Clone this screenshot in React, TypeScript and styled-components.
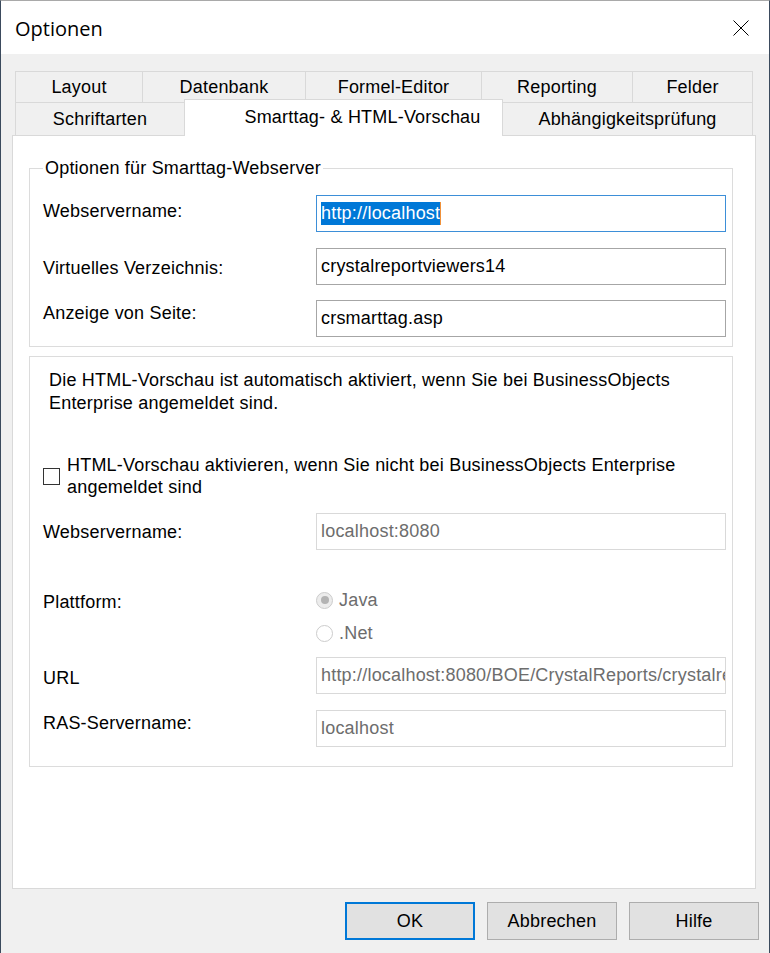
import React from "react";
import styled, { createGlobalStyle } from "styled-components";

const GlobalStyle = createGlobalStyle`
  html, body { margin: 0; padding: 0; background: #f0f0f0; }
  body {
    font-family: "Liberation Sans", Arial, sans-serif;
    font-size: 18px;
    letter-spacing: 0.2px;
    color: #000;
  }
  * { box-sizing: border-box; }
`;

const Window = styled.div`
  width: 770px;
  height: 953px;
  display: flex;
  flex-direction: column;
  border-left: 1px solid #3b4a5d;
  border-right: 1px solid #3b4a5d;
  border-top: 1px solid #a9a9a9;
  background: #f0f0f0;
  overflow: hidden;
`;

const TitleBar = styled.div`
  height: 53px;
  flex-shrink: 0;
  background: #fff;
  display: flex;
  align-items: center;
  justify-content: space-between;
  padding: 0 20px 0 14px;
`;

const Title = styled.div`
  font-family: "Open Sans", "Noto Sans", sans-serif;
  font-size: 20px;
  letter-spacing: 0;
  padding-top: 2px;
`;

const CloseIcon = styled.svg`
  width: 16px;
  height: 16px;
  display: block;
`;

const Body = styled.div`
  flex: 1;
  display: flex;
  flex-direction: column;
  padding: 17px 11px 0 11px;
`;

const TabStrip = styled.div`
  width: 744px;
  padding: 0 3px;
  display: flex;
  flex-direction: column;
`;

const TabRow = styled.div<{ $h: number }>`
  display: flex;
  height: ${(p) => p.$h}px;
`;

const Tab = styled.div<{ $w: number; $active?: boolean }>`
  width: ${(p) => p.$w}px;
  flex-shrink: 0;
  display: flex;
  align-items: center;
  justify-content: center;
  border: 1px solid #d9d9d9;
  border-bottom: none;
  margin-left: -1px;
  background: ${(p) => (p.$active ? "#fff" : "#f0f0f0")};
  white-space: nowrap;
  &:first-child { margin-left: 0; }
  ${(p) =>
    p.$active &&
    `
    position: relative;
    z-index: 1;
    height: 37px;
    margin-top: -3px;
    margin-bottom: -1px;
    padding-left: 38px;
    padding-bottom: 2px;
  `}
`;

const Panel = styled.div`
  width: 744px;
  height: 754px;
  background: #fff;
  border: 1px solid #d9d9d9;
  padding: 22px 22px 0 16px;
  display: flex;
  flex-direction: column;
`;

const Fieldset = styled.fieldset`
  margin: 0;
  padding: 0 6px 9px 13px;
  border: 1px solid #dcdcdc;
  min-width: 0;
`;

const Legend = styled.legend`
  padding: 0 2px;
  line-height: 20px;
`;

const Group = styled.div`
  margin-top: 9px;
  border: 1px solid #dcdcdc;
  padding: 0 6px 19px 13px;
  display: flex;
  flex-direction: column;
`;

const FormRow = styled.div<{ $mt: number }>`
  display: grid;
  grid-template-columns: 273px 1fr;
  margin-top: ${(p) => p.$mt}px;
`;

const Label = styled.div<{ $dy: number }>`
  padding-top: ${(p) => p.$dy}px;
  line-height: 20px;
`;

const TextBox = styled.div<{ $state?: "focus" | "disabled" }>`
  height: 37px;
  border: 1px solid
    ${(p) =>
      p.$state === "focus" ? "#3d8fd8" : p.$state === "disabled" ? "#d9d9d9" : "#a6a6a6"};
  background: #fff;
  color: ${(p) => (p.$state === "disabled" ? "#6d6d6d" : "#000")};
  padding: 0 4px;
  display: flex;
  align-items: center;
  overflow: hidden;
  white-space: nowrap;
`;

const Selection = styled.span`
  background: #0078d7;
  color: #fff;
  line-height: 23px;
`;

const Caret = styled.span`
  display: inline-block;
  width: 1px;
  height: 23px;
  background: #f0913a;
`;

const Description = styled.div`
  margin-top: 12px;
  padding-left: 6px;
  line-height: 23px;
`;

const CheckRow = styled.label`
  margin-top: 39px;
  display: flex;
  align-items: center;
  gap: 7px;
  line-height: 22px;
`;

const CheckBox = styled.span`
  width: 17px;
  height: 17px;
  flex-shrink: 0;
  border: 1px solid #333;
  background: #fff;
`;

const RadioList = styled.div`
  display: flex;
  flex-direction: column;
  gap: 11px;
`;

const RadioItem = styled.div`
  height: 22px;
  display: flex;
  align-items: center;
  gap: 6px;
  color: #6d6d6d;
`;

const Radio = styled.span<{ $checked?: boolean }>`
  width: 17px;
  height: 17px;
  border-radius: 50%;
  border: 1px solid #cccccc;
  background: ${(p) => (p.$checked ? "#ececec" : "#fff")};
  display: flex;
  align-items: center;
  justify-content: center;
  &::after {
    content: "";
    width: 8px;
    height: 8px;
    border-radius: 50%;
    background: ${(p) => (p.$checked ? "#b3b3b3" : "transparent")};
  }
`;

const ButtonBar = styled.div`
  margin-top: 13px;
  display: flex;
  justify-content: flex-end;
  gap: 12px;
  margin-right: -1px;
`;

const Button = styled.button<{ $default?: boolean }>`
  width: 130px;
  height: 38px;
  font-family: inherit;
  font-size: 18px;
  letter-spacing: 0.2px;
  color: #000;
  background: #e1e1e1;
  border: 1px solid ${(p) => (p.$default ? "#0078d7" : "#adadad")};
  box-shadow: ${(p) => (p.$default ? "inset 0 0 0 1px #0078d7" : "none")};
  padding: 0;
`;

export default function App() {
  return (
    <>
      <GlobalStyle />
      <Window>
        <TitleBar>
          <Title>Optionen</Title>
          <CloseIcon viewBox="0 0 16 16">
            <path d="M0.5 0.5 L15.5 15.5 M15.5 0.5 L0.5 15.5" stroke="#000" strokeWidth="1" fill="none" />
          </CloseIcon>
        </TitleBar>
        <Body>
          <TabStrip>
            <TabRow $h={31}>
              <Tab $w={128}>Layout</Tab>
              <Tab $w={164}>Datenbank</Tab>
              <Tab $w={177}>Formel-Editor</Tab>
              <Tab $w={152}>Reporting</Tab>
              <Tab $w={121}>Felder</Tab>
            </TabRow>
            <TabRow $h={33}>
              <Tab $w={170}>Schriftarten</Tab>
              <Tab $w={319} $active>
                Smarttag- &amp; HTML-Vorschau
              </Tab>
              <Tab $w={251}>Abhängigkeitsprüfung</Tab>
            </TabRow>
          </TabStrip>
          <Panel>
            <Fieldset>
              <Legend>Optionen für Smarttag-Webserver</Legend>
              <FormRow $mt={17}>
                <Label $dy={6}>Webservername:</Label>
                <TextBox $state="focus">
                  <Selection>http://localhost</Selection>
                  <Caret />
                </TextBox>
              </FormRow>
              <FormRow $mt={16}>
                <Label $dy={10}>Virtuelles Verzeichnis:</Label>
                <TextBox>crystalreportviewers14</TextBox>
              </FormRow>
              <FormRow $mt={15}>
                <Label $dy={3}>Anzeige von Seite:</Label>
                <TextBox>crsmarttag.asp</TextBox>
              </FormRow>
            </Fieldset>
            <Group>
              <Description>
                Die HTML-Vorschau ist automatisch aktiviert, wenn Sie bei BusinessObjects
                <br />
                Enterprise angemeldet sind.
              </Description>
              <CheckRow>
                <CheckBox />
                <span>
                  HTML-Vorschau aktivieren, wenn Sie nicht bei BusinessObjects Enterprise
                  <br />
                  angemeldet sind
                </span>
              </CheckRow>
              <FormRow $mt={15}>
                <Label $dy={9}>Webservername:</Label>
                <TextBox $state="disabled">localhost:8080</TextBox>
              </FormRow>
              <FormRow $mt={39}>
                <Label $dy={3}>Plattform:</Label>
                <RadioList>
                  <RadioItem>
                    <Radio $checked />
                    Java
                  </RadioItem>
                  <RadioItem>
                    <Radio />
                    .Net
                  </RadioItem>
                </RadioList>
              </FormRow>
              <FormRow $mt={13}>
                <Label $dy={11}>URL</Label>
                <TextBox $state="disabled">
                  http://localhost:8080/BOE/CrystalReports/crystalreportviewers14
                </TextBox>
              </FormRow>
              <FormRow $mt={16}>
                <Label $dy={3}>RAS-Servername:</Label>
                <TextBox $state="disabled">localhost</TextBox>
              </FormRow>
            </Group>
          </Panel>
          <ButtonBar>
            <Button $default>OK</Button>
            <Button>Abbrechen</Button>
            <Button>Hilfe</Button>
          </ButtonBar>
        </Body>
      </Window>
    </>
  );
}
